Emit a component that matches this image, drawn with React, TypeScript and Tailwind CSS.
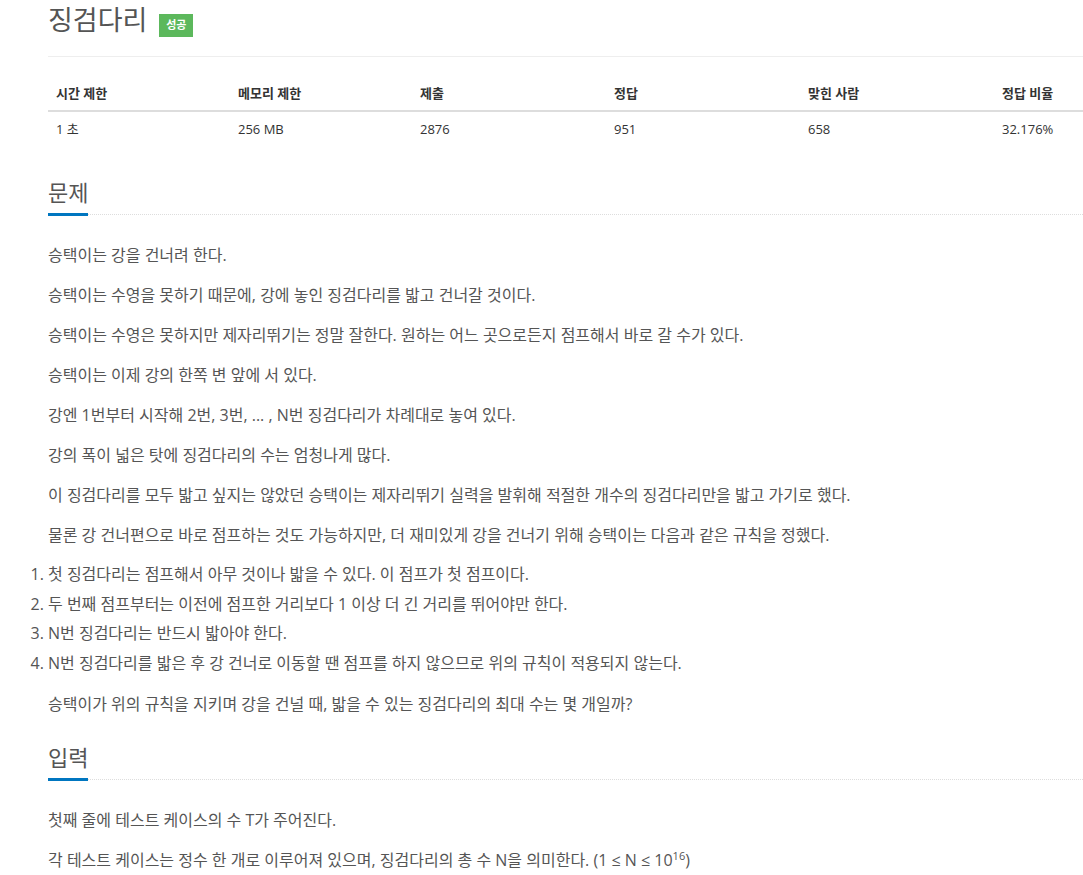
const font = { fontFamily: '"Open Sans", "Noto Sans CJK KR", sans-serif' };

const stats = [
  { label: "시간 제한", value: "1 초" },
  { label: "메모리 제한", value: "256 MB" },
  { label: "제출", value: "2876" },
  { label: "정답", value: "951" },
  { label: "맞힌 사람", value: "658" },
  { label: "정답 비율", value: "32.176%" },
];

const SectionTitle = ({ title }: { title: string }) => (
  <div className="flex items-end">
    <h2 className="text-[22px] leading-[30px] text-[#555] pb-[6px] border-b-[3px] border-[#0076c0]">{title}</h2>
    <div className="flex-1 border-b border-dotted border-[#ddd] mb-[1px]"></div>
  </div>
);

export default function App() {
  return (
    <div className="bg-white min-h-[875px] pl-[48px] overflow-hidden" style={font}>
      <div className="flex items-start h-[40px]">
        <h1 className="text-[27px] leading-[40px] text-[#555]">징검다리</h1>
        <span className="ml-[12px] mt-[14px] w-[34px] h-[23px] flex items-center justify-center bg-[#5cb85c] text-white text-[11px] font-semibold">성공</span>
      </div>
      <div className="mt-[16px] border-t border-[#eee]"></div>

      <div className="mt-[20px] grid grid-cols-[182px_182px_194px_194px_194px_1fr] text-[13px]">
        {stats.map((s) => (
          <div key={s.label} className="px-2 h-[35px] flex items-center font-bold text-[#333] border-b-2 border-[#ddd]">{s.label}</div>
        ))}
        {stats.map((s) => (
          <div key={s.label + "v"} className="px-2 h-[35px] flex items-center text-[#333]">{s.value}</div>
        ))}
      </div>

      <div className="mt-[30px]">
        <SectionTitle title="문제" />
      </div>

      <div className="mt-[24px] text-[16px] leading-[30px] text-[#555]">
        <p className="mb-[10px]">승택이는 강을 건너려 한다.</p>
        <p className="mb-[10px]">승택이는 수영을 못하기 때문에, 강에 놓인 징검다리를 밟고 건너갈 것이다.</p>
        <p className="mb-[10px]">승택이는 수영은 못하지만 제자리뛰기는 정말 잘한다. 원하는 어느 곳으로든지 점프해서 바로 갈 수가 있다.</p>
        <p className="mb-[10px]">승택이는 이제 강의 한쪽 변 앞에 서 있다.</p>
        <p className="mb-[10px]">강엔 1번부터 시작해 2번, 3번, ... , N번 징검다리가 차례대로 놓여 있다.</p>
        <p className="mb-[10px]">강의 폭이 넓은 탓에 징검다리의 수는 엄청나게 많다.</p>
        <p className="mb-[10px]">이 징검다리를 모두 밟고 싶지는 않았던 승택이는 제자리뛰기 실력을 발휘해 적절한 개수의 징검다리만을 밟고 가기로 했다.</p>
        <p className="mb-[10px]">물론 강 건너편으로 바로 점프하는 것도 가능하지만, 더 재미있게 강을 건너기 위해 승택이는 다음과 같은 규칙을 정했다.</p>
        <ol className="list-decimal list-outside mb-[10px] leading-[29.7px]">
          <li>첫 징검다리는 점프해서 아무 것이나 밟을 수 있다. 이 점프가 첫 점프이다.</li>
          <li>두 번째 점프부터는 이전에 점프한 거리보다 1 이상 더 긴 거리를 뛰어야만 한다.</li>
          <li>N번 징검다리는 반드시 밟아야 한다.</li>
          <li>N번 징검다리를 밟은 후 강 건너로 이동할 땐 점프를 하지 않으므로 위의 규칙이 적용되지 않는다.</li>
        </ol>
        <p className="mb-[10px]">승택이가 위의 규칙을 지키며 강을 건널 때, 밟을 수 있는 징검다리의 최대 수는 몇 개일까?</p>
      </div>

      <div className="mt-[23px]">
        <SectionTitle title="입력" />
      </div>

      <div className="mt-[24px] text-[16px] leading-[30px] text-[#555]">
        <p className="mb-[10px]">첫째 줄에 테스트 케이스의 수 T가 주어진다.</p>
        <p className="mb-[10px]">
          각 테스트 케이스는 정수 한 개로 이루어져 있으며, 징검다리의 총 수 N을 의미한다. (1 ≤ N ≤ 10<sup className="text-[11px]">16</sup>)
        </p>
      </div>
    </div>
  );
}
